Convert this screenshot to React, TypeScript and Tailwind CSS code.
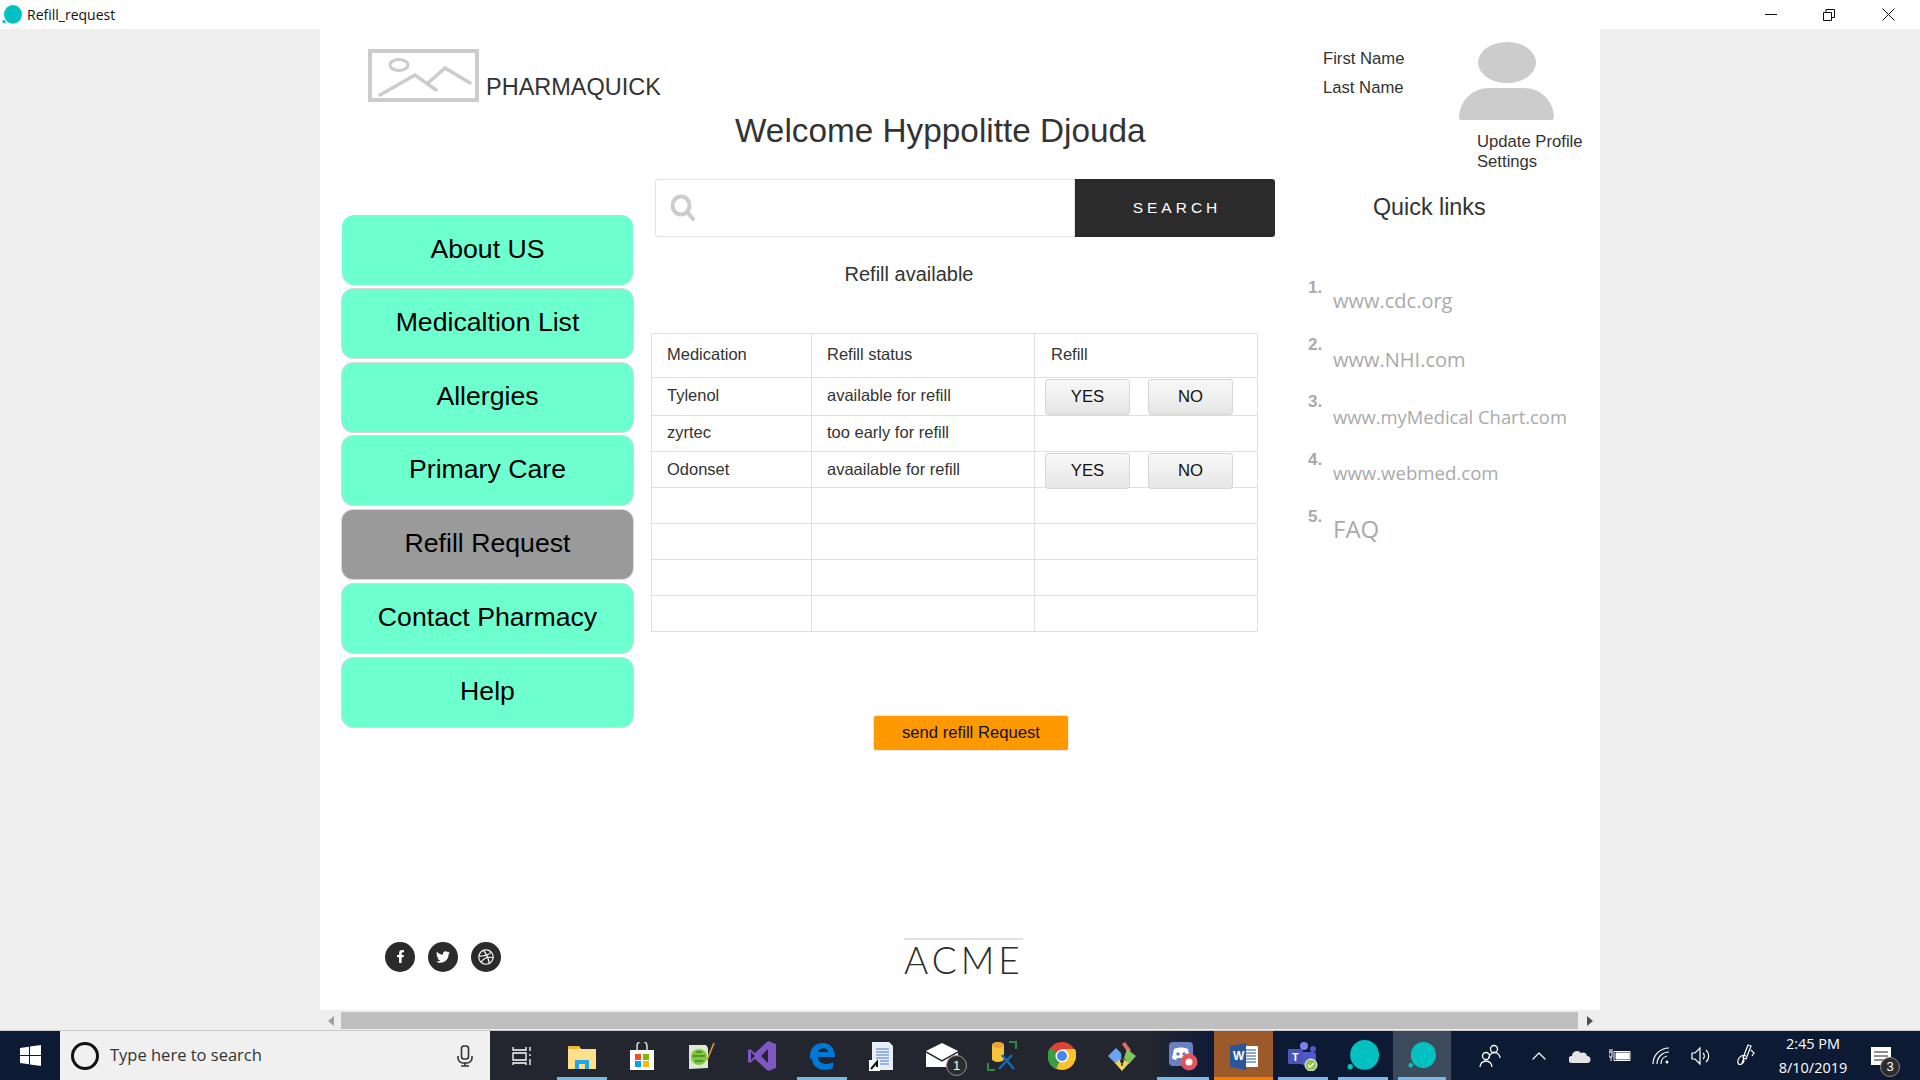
import React from "react";
import { ChevronUp } from "lucide-react";
import { FaFacebookF, FaTwitter, FaDribbble } from "react-icons/fa";

const navItems = ["About US", "Medicaltion List", "Allergies", "Primary Care", "Refill Request", "Contact Pharmacy", "Help"];
const links = [
  { t: "www.cdc.org", c: "mt-[6px] text-[20px]" },
  { t: "www.NHI.com", c: "mt-[8px] text-[20px]" },
  { t: "www.myMedical Chart.com", c: "mt-[8px] text-[18.4px]" },
  { t: "www.webmed.com", c: "mt-[6px] text-[18.6px]" },
  { t: "FAQ", c: "mt-[5px] text-[24px]" },
];

function Blob({ size = 30 }: { size?: number }) {
  return (
    <svg width={size} height={size} viewBox="0 0 30 30">
      <ellipse cx="16.5" cy="14" rx="13.5" ry="14" fill="#04c1c1" />
      <circle cx="3" cy="25" r="2.5" fill="#04c1c1" />
    </svg>
  );
}

function Cell({ children, line, bg, w }: { children?: React.ReactNode; line?: string; bg?: string; w?: string }) {
  return (
    <div className={`relative flex h-full items-center justify-center ${w ?? "w-[60px]"} ${bg ?? ""}`}>
      {children}
      {line && <div className={`absolute bottom-0 left-[5px] right-[5px] h-[3px] ${line}`} />}
    </div>
  );
}

function Rows() {
  const cell = "border-r border-[#e0e0e0] px-[15px] text-[16.5px] text-[#333]";
  const btn = "flex h-[36px] w-[85px] items-center justify-center rounded-[3px] border border-[#d6d6d6] bg-gradient-to-b from-[#f8f8f8] to-[#e6e6e6] text-[16.7px] text-[#111]";
  const rows: { h: string; a?: string; b?: string; btn?: boolean }[] = [
    { h: "h-[44px]", a: "Medication", b: "Refill status" },
    { h: "h-[38px]", a: "Tylenol", b: "available for refill", btn: true },
    { h: "h-[36px]", a: "zyrtec", b: "too early for refill" },
    { h: "h-[36px]", a: "Odonset", b: "avaailable for refill", btn: true },
    { h: "h-[36px]" },
    { h: "h-[36px]" },
    { h: "h-[36px]" },
    { h: "h-[36px]" },
  ];
  return (
    <div className="w-[607px] border-l border-t border-[#e0e0e0]">
      {rows.map((r, i) => (
        <div key={i} className={`grid grid-cols-[160px_223px_223px] border-b border-[#e0e0e0] ${r.h}`}>
          <div className={`${cell} flex items-center pb-[2px]`}>{r.a}</div>
          <div className={`${cell} flex items-center pb-[2px]`}>{r.b}</div>
          <div className={`${cell} flex items-start !px-[10px]`}>
            {i === 0 && <span className="ml-[6px] self-center pb-[2px]">Refill</span>}
            {r.btn && (
              <div className="mt-[1px] flex gap-[18px]">
                <div className={btn}>YES</div>
                <div className={btn}>NO</div>
              </div>
            )}
          </div>
        </div>
      ))}
    </div>
  );
}

export default function App() {
  return (
    <div className="flex h-[1080px] w-[1920px] flex-col overflow-hidden bg-[#eeeeee] font-['Liberation_Sans',sans-serif]">
      {/* title bar */}
      <div className="flex h-[29px] shrink-0 items-center bg-white pl-[2px]">
        <Blob size={20} />
        <span className="ml-[5px] font-['Open_Sans',sans-serif] text-[14px] text-[#111]">Refill_request</span>
        <div className="ml-auto flex items-center">
          <svg width="12" height="12" className="mr-[46px]"><path d="M0 5.5H12" stroke="#111" /></svg>
          <svg width="12" height="12" className="mr-[47px]" fill="none" stroke="#111"><path d="M.5 3.5h8v8h-8zM3 3V.5h8.5v8H9" /></svg>
          <svg width="13" height="13" className="mr-[25px]" stroke="#111"><path d="M.5.5l12 12M12.5.5l-12 12" /></svg>
        </div>
      </div>

      {/* page */}
      <div className="ml-[320px] flex h-[981px] w-[1280px] shrink-0 bg-white">
        {/* left */}
        <div className="w-[331px] shrink-0 pl-[22px]">
          <div className="ml-[26px] mt-[20px] flex w-max items-end">
            <svg width="111" height="53" viewBox="0 0 111 53" fill="none" stroke="#cccccc" strokeWidth="3" strokeLinecap="round" className="shrink-0">
              <rect x="2" y="2" width="107" height="49" strokeWidth="4" />
              <ellipse cx="31" cy="16" rx="9" ry="5.5" strokeWidth="3" />
              <path d="M12 46 L47 26 L68 41 M60 34 L77 19 L102 34" strokeWidth="3.5" />
            </svg>
            <span className="mb-[1px] ml-[7px] text-[23.5px] leading-[28px] text-[#333]">PHARMAQUICK</span>
          </div>
          <div className="mt-[113px] flex w-[291px] flex-col gap-[2.8px]">
            {navItems.map((n, i) => (
              <div
                key={n}
                className={`flex items-center justify-center rounded-[12px] pb-[3px] text-[26.67px] text-black ${
                  i === 0
                    ? "h-[70px] bg-[#6effce]"
                    : n === "Refill Request"
                    ? "-mx-[1px] h-[71px] border border-[#d8d8d8] bg-[#9a9a9a]"
                    : "-mx-[1px] h-[71px] border border-[#d8d8d8] bg-[#6effce]"
                }`}
              >
                {n}
              </div>
            ))}
          </div>
          <div className="ml-[43px] mt-[214px] flex gap-[13px]">
            <div className="flex h-[30px] w-[30px] items-center justify-center rounded-full bg-[#2b2b2b] text-white"><FaFacebookF size={13} /></div>
            <div className="flex h-[30px] w-[30px] items-center justify-center rounded-full bg-[#2b2b2b] text-white"><FaTwitter size={14} /></div>
            <div className="flex h-[30px] w-[30px] items-center justify-center rounded-full bg-[#2b2b2b] text-white"><FaDribbble size={16} /></div>
          </div>
        </div>

        {/* center */}
        <div className="w-[624px] shrink-0">
          <div className="ml-[84px] mt-[80px] text-[33.33px] leading-[44px] text-[#333]">Welcome Hyppolitte Djouda</div>
          <div className="ml-[4px] mt-[26px] flex h-[58px] w-[620px]">
            <div className="flex w-[420px] items-center rounded-l-[3px] border border-[#e2e2e2] pl-[14px]">
              <svg width="26" height="28" viewBox="0 0 26 28" fill="none" stroke="#cccccc" strokeWidth="4" strokeLinecap="round">
                <ellipse cx="11" cy="11.5" rx="8.5" ry="9" />
                <path d="M18 19l5 6" />
              </svg>
            </div>
            <div className="flex w-[200px] items-center justify-center rounded-r-[3px] bg-[#2b2b2b] pl-[4px] text-[15.5px] tracking-[4px] text-white">SEARCH</div>
          </div>
          <div className="mt-[25px] w-[516px] text-center text-[20px] leading-[24px] text-[#333]">Refill available</div>
          <div className="mt-[47px]"><Rows /></div>
          <div className="ml-[222px] mt-[83px] flex h-[36px] w-[196px] items-center justify-center rounded-[3px] border border-[#e8e8e8] bg-[#ff9900] pb-[2px] text-[16.67px] text-[#111]">send refill Request</div>
          <div className="ml-[253px] mt-[187px] w-[119px] border-t-2 border-[#e2e2e2] text-center font-['Lato',sans-serif] text-[37px] font-light leading-[40px] tracking-[4px] text-[#2b2b2b]">ACME</div>
        </div>

        {/* right */}
        <div className="flex-1">
          <div className="flex">
            <div className="ml-[48px] mt-[15px] w-[136px] text-[16.67px] leading-[29px] text-[#333]">
              <div>First Name</div>
              <div>Last Name</div>
            </div>
            <div className="mt-[13px] flex w-[95px] flex-col items-center">
              <div className="h-[41px] w-[58px] rounded-[50%] bg-[#cccccc]" />
              <div className="mt-[5px] h-[32px] w-[95px] rounded-t-[48px] rounded-b-[4px] bg-[#cccccc]" />
            </div>
          </div>
          <div className="ml-[202px] mt-[12px] text-[16.67px] leading-[20px] text-[#333]">
            <div>Update Profile</div>
            <div>Settings</div>
          </div>
          <div className="ml-[98px] mt-[20px] text-[23.3px] leading-[30px] text-[#333]">Quick links</div>
          <ol className="ml-[33px] mt-[56px] font-['Open_Sans',sans-serif]">
            {links.map((l, i) => (
              <li key={l.t} className="flex h-[57.2px] text-[#aaaaaa]">
                <span className="w-[25px] font-['Liberation_Sans',sans-serif] text-[17px] font-bold leading-[20px] text-[#aaaaaa]">{i + 1}.</span>
                <span className={`leading-[34px] ${l.c}`}>{l.t}</span>
              </li>
            ))}
          </ol>
        </div>
      </div>

      {/* scrollbar */}
      <div className="mt-[2px] flex h-[17px] shrink-0 items-center">
        <div className="ml-[328px] h-0 w-0 border-y-[5px] border-r-[6px] border-y-transparent border-r-[#a0a0a0]" />
        <div className="ml-[7px] h-[17px] w-[1237px] bg-[#bfbfbf]" />
        <div className="ml-[9px] h-0 w-0 border-y-[5px] border-l-[6px] border-y-transparent border-l-[#505050]" />
      </div>

      {/* taskbar */}
      <div className="mt-[1px] flex h-[50px] shrink-0 items-center border-t border-[#c8c8c8] bg-[#0d1a33]">
        <div className="flex h-full w-[60px] items-center justify-center">
          <svg width="21" height="21" viewBox="0 0 21 21" fill="#fff"><path d="M0 3l9-1.3V10H0zM10 1.5L21 0v10H10zM0 11h9v8.3L0 18zM10 11h11v10l-11-1.5z" /></svg>
        </div>
        <div className="flex h-full w-[430px] items-center bg-[#f0f0f0] pl-[11px] pr-[17px]">
          <div className="h-[28px] w-[28px] rounded-full border-[3.5px] border-[#111]" />
          <span className="ml-[11px] font-['Open_Sans',sans-serif] text-[16.5px] text-[#333]">Type here to search</span>
          <svg width="16" height="22" viewBox="0 0 16 22" fill="none" stroke="#333" strokeWidth="1.6" className="ml-auto">
            <rect x="4.5" y="1" width="7" height="13" rx="2.5" />
            <path d="M1 11v2a5 5 0 0 0 5 5h4a5 5 0 0 0 5-5v-2M8 18v3M4 21h8" />
          </svg>
        </div>
        <div className="flex h-full items-center bg-[#23262f]">
          <div className="w-[2px]" />
          <Cell>
            <svg width="20" height="20" fill="none" stroke="#fff" strokeWidth="1.3"><path d="M1 1v3h13V1M1 7h13v7H1zM1 19v-2h13v2M18 1v4M18 8v2M18 13v6" /></svg>
          </Cell>
          <Cell line="bg-[#76b9ed]">
            <svg width="28" height="26" viewBox="0 0 28 26"><path d="M0 3h11l2 3h15v20H0z" fill="#ffe08a" /><path d="M0 3h11v3H0z" fill="#e8b93f" /><path d="M7 26v-9h14v9h-4v-5h-6v5z" fill="#1ea7e8" /></svg>
          </Cell>
          <Cell>
            <svg width="26" height="28" viewBox="0 0 26 28"><path d="M1 8h24v20H1z" fill="#fff" /><path d="M8 8V4a5 5 0 0 1 10 0v4" fill="none" stroke="#ddd" strokeWidth="1.5" /><path d="M6 12h6v6H6z" fill="#f25022" /><path d="M14 12h6v6h-6z" fill="#7fba00" /><path d="M6 19h6v6H6z" fill="#00a4ef" /><path d="M14 19h6v6h-6z" fill="#ffb900" /></svg>
          </Cell>
          <Cell>
            <svg width="28" height="28" viewBox="0 0 28 28"><path d="M1 3h17l2 3v20l-19 1z" fill="#dfe8d6" /><circle cx="11" cy="15" r="8" fill="#7cc83f" /><path d="M5 14h12M7 19h8M8 10h6" stroke="#2f5a1c" strokeWidth="1.2" /><path d="M19 18L26 1" stroke="#d9a227" strokeWidth="1.6" /></svg>
          </Cell>
          <Cell>
            <svg width="28" height="30" viewBox="0 0 28 30"><path d="M20 0l8 3v24l-8 3L7 18l-5 4-2-1V9l2-1 5 4z" fill="#7e57c2" /><path d="M20 8l-7 7 7 7zM3 11v8l4-4z" fill="#23262f" /></svg>
          </Cell>
          <Cell line="bg-[#76b9ed]">
            <svg width="28" height="28" viewBox="0 0 28 28"><path d="M2 14C2 5 8 1 15 1c7 0 12 5 12 14H10c0 7 9 9 15 5v6c-8 4-21 2-21-10-1 1-2 3-2-2zM10 10h10c0-5-9-5-10 0z" fill="#0078d7" /></svg>
          </Cell>
          <Cell>
            <svg width="26" height="30" viewBox="0 0 26 30"><path d="M3 1h17l4 4v24H3z" fill="#e8eef8" /><path d="M7 8h13M7 11h13M7 14h13M7 17h13M7 20h13M7 23h13" stroke="#4a78c8" strokeWidth="1.2" /><rect x="0" y="19" width="11" height="11" fill="#fff" /><path d="M2 28l6-7v4h1" stroke="#111" strokeWidth="2" fill="none" /></svg>
          </Cell>
          <Cell>
            <div className="relative h-[26px] w-[32px]">
              <svg width="32" height="26" viewBox="0 0 32 26"><path d="M0 8L16 0l16 8v16H0z" fill="#fff" /><path d="M0 9l16 9 16-9" fill="none" stroke="#23262f" strokeWidth="1.5" /></svg>
              <div className="absolute left-[20px] top-[12px] flex h-[21px] w-[21px] items-center justify-center rounded-full border border-[#999] bg-[#2c2c2c] text-[13px] leading-none text-white">1</div>
            </div>
          </Cell>
          <Cell>
            <svg width="30" height="30" viewBox="0 0 30 30"><path d="M22 1h7v7M1 22v7h7" stroke="#2e8b3d" strokeWidth="2" fill="none" /><path d="M5 4a6 3 0 0 1 12 0v14a6 3 0 0 1-12 0z" fill="#f5c33b" /><path d="M5 4a6 3 0 0 1 12 0 6 3 0 0 1-12 0z" fill="#e8a33a" /><path d="M12 28l13-14M27 28L15 14" stroke="#0f6cbd" strokeWidth="2.5" /></svg>
          </Cell>
          <Cell>
            <svg width="28" height="28" viewBox="0 0 28 28"><circle cx="14" cy="14" r="14" fill="#db4437" /><path d="M14 14L26 21A14 14 0 0 1 8 26.6z" fill="#fbc02d" /><path d="M14 7h13a14 14 0 0 1-8 19z" fill="#f9c52e" /><path d="M14 14L8 27A14 14 0 0 1 2 6z" fill="#3a9d44" /><circle cx="14" cy="14" r="6.5" fill="#fff" /><circle cx="14" cy="14" r="5" fill="#4285f4" /></svg>
          </Cell>
          <Cell>
            <svg width="30" height="30" viewBox="0 0 30 30"><path d="M1 15l8-8 6 6v4l-6 6z" fill="#6aa5ef" /><path d="M15 3l3-2 6 8-3 3z" fill="#e96a6a" /><path d="M20 8l9 7-7 8-5-6z" fill="#7ec55b" /><path d="M8 22l7-5 7 5-7 8z" fill="#f2d35c" /><path d="M15 6v19" stroke="#23262f" strokeWidth="1.5" /><circle cx="15" cy="20" r="2" fill="#23262f" /></svg>
          </Cell>
          <div className="flex h-full items-center self-stretch bg-gradient-to-r from-[#23262f] to-[#0f1a38]">
            <Cell line="bg-[#76b9ed]" w="w-[62px]">
              <svg width="30" height="30" viewBox="0 0 30 30"><rect x="1" y="1" width="24" height="24" rx="4" fill="#6b7fc4" /><path d="M6 8c5-2 9-2 14 0l2 9c-1 1-3 2-4 2l-1-2H9l-1 2c-1 0-3-1-4-2z" fill="#fff" /><circle cx="10" cy="13" r="1.8" fill="#6b7fc4" /><circle cx="16" cy="13" r="1.8" fill="#6b7fc4" /><circle cx="21" cy="21" r="8.5" fill="#e0545b" /><circle cx="21" cy="21" r="3.5" fill="#fff" /></svg>
            </Cell>
          </div>
        </div>
        <div className="flex h-full items-center">
          <div className="relative flex h-full w-[59px] items-center justify-center bg-[#9c5a2a]">
            <svg width="28" height="28" viewBox="0 0 28 28"><rect x="13" y="4" width="15" height="21" fill="#fff" /><path d="M16 8h10M16 11h10M16 14h10M16 17h10M16 20h10" stroke="#2b579a" strokeWidth="1.2" /><path d="M0 4l16-3v27L0 25z" fill="#2b579a" /><text x="3" y="18" fill="#fff" fontSize="12" fontFamily="Liberation Sans" fontWeight="700">W</text></svg>
            <div className="absolute bottom-0 left-0 right-0 h-[3px] bg-[#f57c00]" />
          </div>
          <Cell line="bg-[#76b9ed]">
            <svg width="30" height="30" viewBox="0 0 30 30"><circle cx="16" cy="5" r="4" fill="#7b83eb" /><circle cx="25" cy="8" r="3" fill="#5059c9" /><rect x="13" y="11" width="15" height="13" rx="3" fill="#5059c9" /><rect x="0" y="8" width="15" height="15" rx="1" fill="#4b53bc" /><text x="4" y="20" fill="#fff" fontSize="11" fontFamily="Liberation Sans" fontWeight="700">T</text><circle cx="23" cy="24" r="6" fill="#92c353" stroke="#fff" strokeWidth="1" /><path d="M20 24l2 2 4-4" stroke="#fff" strokeWidth="1.4" fill="none" /></svg>
          </Cell>
          <Cell line="bg-[#76b9ed]"><Blob size={32} /></Cell>
          <Cell line="bg-[#76b9ed]" bg="bg-[#3c4a5c]" w="w-[58px]"><Blob size={28} /></Cell>
        </div>
        <div className="flex h-full flex-1 items-center text-white">
          <svg width="22" height="24" viewBox="0 0 22 24" fill="none" stroke="#fff" strokeWidth="1.3" className="ml-[28px]">
            <circle cx="15" cy="5" r="3.5" /><path d="M10 14a5.5 5.5 0 0 1 11 0" /><circle cx="7" cy="12" r="3.5" /><path d="M1 23a6 6 0 0 1 12 0" />
          </svg>
          <ChevronUp size={24} strokeWidth={1.2} className="ml-[26px]" />
          <svg width="22" height="14" viewBox="0 0 22 14" className="ml-[18px]"><path d="M3 14a3 3 0 0 1 0-7 5 5 0 0 1 9-3 4 4 0 0 1 6 3 3.5 3.5 0 0 1 0 7z" fill="#e4e4e4" /></svg>
          <svg width="22" height="14" viewBox="0 0 22 14" fill="none" stroke="#fff" className="ml-[18px]"><path d="M5 2.5h16v9H5zM0 3h3v5H0zM1 0v3M3 0v3M2 8v4" /><path d="M7 4h13v6H7z" fill="#fff" /></svg>
          <svg width="18" height="18" viewBox="0 0 18 18" fill="none" stroke="#fff" strokeWidth="1.2" className="ml-[21px]">
            <path d="M1 17A16 16 0 0 1 17 1M5 17A12 12 0 0 1 17 5M9 17a8 8 0 0 1 6-8" /><circle cx="15" cy="15" r="1.5" fill="#fff" stroke="none" />
          </svg>
          <svg width="20" height="20" viewBox="0 0 20 20" fill="none" stroke="#fff" strokeWidth="1.2" className="ml-[21px]">
            <path d="M1 7h3l5-5v16l-5-5H1zM12 7a4 4 0 0 1 0 6M15 4a8 8 0 0 1 0 12" />
          </svg>
          <svg width="20" height="24" viewBox="0 0 20 24" fill="none" stroke="#fff" strokeWidth="1.2" className="ml-[25px]">
            <path d="M12 1l3 1-5 13-3-1zM8 14l-2 5M15 6l3 3-2 3M10 12c-4-2-9 2-8 7 1 3 6 1 6-3" />
          </svg>
          <div className="ml-[21px] w-[72px] text-center font-['Open_Sans',sans-serif] text-[14.5px] leading-[24px]">
            <div>2:45 PM</div>
            <div>8/10/2019</div>
          </div>
          <div className="relative ml-[22px]">
            <svg width="20" height="18" viewBox="0 0 20 18"><path d="M0 0h20v18H0z" fill="#fff" /><path d="M3 5h14M3 9h14M3 13h10" stroke="#222" /></svg>
            <div className="absolute left-[9px] top-[10px] flex h-[20px] w-[20px] items-center justify-center rounded-full border border-[#888] bg-[#2c2c2c] text-[13px] leading-none">3</div>
          </div>
        </div>
      </div>
    </div>
  );
}
